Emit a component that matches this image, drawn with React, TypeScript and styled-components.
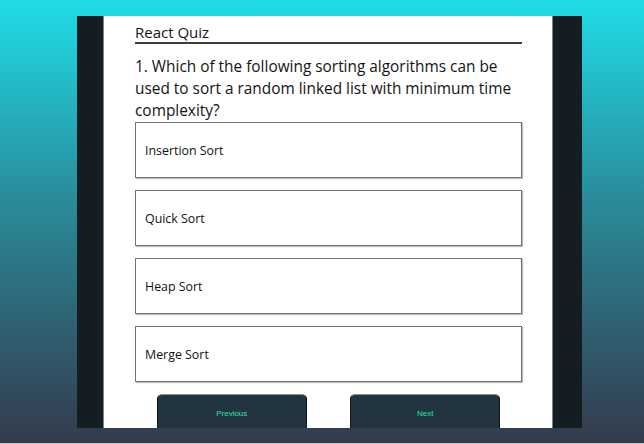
import React from "react";
import styled, { createGlobalStyle } from "styled-components";

const Global = createGlobalStyle`
  html, body { margin: 0; padding: 0; }
  body { background: #333b4d; }
  * { box-sizing: border-box; }
`;

const Page = styled.div`
  width: 644px;
  height: 444px;
  padding-top: 16px;
  background: linear-gradient(to bottom, #1fdde8 0%, #2a8b9a 45%, #343a4d 100%);
  border-bottom: 1px solid #c8cacd;
  overflow: hidden;
`;

const Frame = styled.div`
  margin-left: 77px;
  width: 505px;
  height: 412px;
  background: #131d22;
  padding: 0 29px 0 26px;
  overflow: hidden;
`;

const Panel = styled.div`
  width: 450px;
  height: 100%;
  background: #ffffff;
  border-left: 1px solid #7d8388;
  border-right: 1px solid #7d8388;
  padding: 6px 30px 0 31px;
  font-family: "Open Sans", "Noto Sans", sans-serif;
  color: #141414;
`;

const Title = styled.h1`
  margin: 0;
  font-size: 15px;
  font-weight: 500;
  line-height: 20px;
  border-bottom: 2px solid #3a3f44;
`;

const Question = styled.h2`
  margin: 12px 0 0;
  font-size: 15.4px;
  font-weight: 500;
  line-height: 22px;
`;

const Options = styled.div`
  display: flex;
  flex-direction: column;
  gap: 12px;
`;

const Option = styled.div`
  height: 56px;
  border: 1px solid #707478;
  box-shadow: 1px 1px 1px rgba(0, 0, 0, 0.25);
  display: flex;
  align-items: center;
  padding-left: 9px;
  font-size: 12.4px;
  color: #111111;
`;

const Buttons = styled.div`
  display: flex;
  justify-content: space-around;
  margin-top: 12px;
`;

const NavButton = styled.button`
  width: 150px;
  height: 40px;
  background: #21343f;
  color: #2fe2a6;
  border: 1px solid #101619;
  border-top-color: #8e9295;
  border-radius: 5px;
  font-family: "Liberation Sans", Arial, sans-serif;
  font-size: 8px;
  padding: 0;
  padding-bottom: 2px;
`;

const options = ["Insertion Sort", "Quick Sort", "Heap Sort", "Merge Sort"];

export default function App() {
  return (
    <>
      <Global />
      <Page>
        <Frame>
          <Panel>
            <Title>React Quiz</Title>
            <Question>
              1. Which of the following sorting algorithms can be used to sort a
              random linked list with minimum time complexity?
            </Question>
            <Options>
              {options.map((o) => (
                <Option key={o}>{o}</Option>
              ))}
            </Options>
            <Buttons>
              <NavButton>Previous</NavButton>
              <NavButton>Next</NavButton>
            </Buttons>
          </Panel>
        </Frame>
      </Page>
    </>
  );
}
